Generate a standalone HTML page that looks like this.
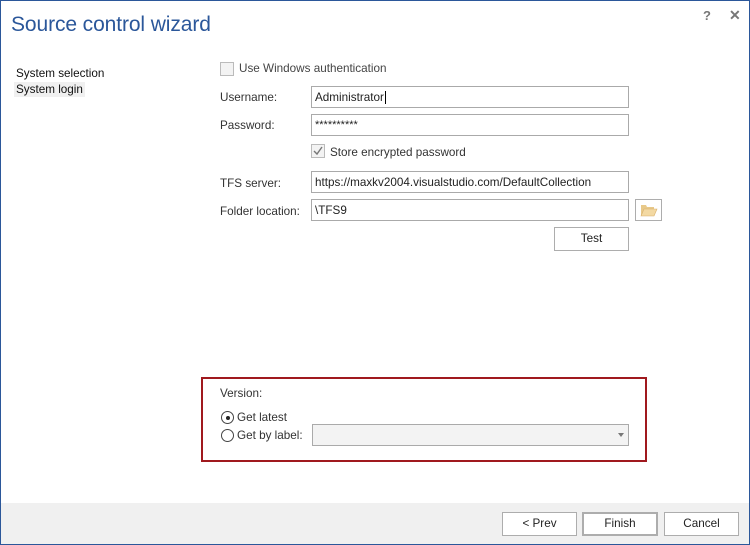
<!DOCTYPE html>
<html><head><style>
*{margin:0;padding:0;box-sizing:border-box}
body{width:750px;height:545px;background:#fff;font-family:"Liberation Sans",sans-serif;font-size:11.7px;color:#333;position:relative;overflow:hidden}
.win{position:absolute;left:0;top:0;width:750px;height:545px;border:1px solid #2b579a}
.a{position:absolute;white-space:nowrap}
.inp{position:absolute;border:1px solid #aaa;background:#fff;height:22px;padding:4px 0 0 3px;color:#222}
.btn{position:absolute;border:1px solid #adadad;background:#fff;height:24px;text-align:center;line-height:22px;color:#222}
.cb{position:absolute;width:14px;height:14px;border:1px solid #bbb;background:#f3f3f3}
.rad{position:absolute;width:13px;height:13px;border:1px solid #444;border-radius:50%;background:#fff}
</style></head><body>
<div class="win"></div>
<div class="a" style="left:11px;top:13px;font-size:21px;color:#2b579a;letter-spacing:-0.1px">Source control wizard</div>
<div class="a" style="left:703px;top:8px;font-weight:bold;color:#777;font-size:13px">?</div>
<div class="a" style="left:729px;top:7px;color:#777;font-size:14px;font-weight:bold">✕</div>
<div class="a" style="left:16px;top:67px;color:#111">System selection</div>
<div class="a" style="left:14px;top:82px;background:#f0f0f0;padding:1px 2px;color:#111">System login</div>

<div class="cb" style="left:220px;top:62px"></div>
<div class="a" style="left:239px;top:62px;color:#444">Use Windows authentication</div>
<div class="a" style="left:220px;top:91px">Username:</div>
<div class="inp" style="left:311px;top:86px;width:318px">Administrator<span style="border-left:1px solid #000;margin-left:1px"></span></div>
<div class="a" style="left:220px;top:119px">Password:</div>
<div class="inp" style="left:311px;top:114px;width:318px;font-size:11px">**********</div>
<div class="cb" style="left:311px;top:144px"><svg width="12" height="12" viewBox="0 0 12 12" style="position:absolute;left:0;top:0"><path d="M2 6l3 3 5-7" fill="none" stroke="#777" stroke-width="1.4"/></svg></div>
<div class="a" style="left:330px;top:146px">Store encrypted password</div>
<div class="a" style="left:220px;top:177px">TFS server:</div>
<div class="inp" style="left:311px;top:171px;width:318px">https://maxkv2004.visualstudio.com/DefaultCollection</div>
<div class="a" style="left:220px;top:205px">Folder location:</div>
<div class="inp" style="left:311px;top:199px;width:318px">\TFS9</div>
<div class="btn" style="left:635px;top:199px;width:27px;height:22px">
<svg width="18" height="14" viewBox="0 0 18 14" style="margin-top:3px"><path d="M1 2h5l1 2h7v2H4L1 13z" fill="#e8c98a"/><path d="M4 6h13l-3 7H1z" fill="#f3d9a3" stroke="#d9b06a" stroke-width=".6"/></svg></div>
<div class="btn" style="left:554px;top:227px;width:75px">Test</div>

<div class="a" style="left:201px;top:377px;width:446px;height:85px;border:2px solid #a0191e"></div>
<div class="a" style="left:220px;top:387px">Version:</div>
<div class="rad" style="left:221px;top:411px"><div style="position:absolute;left:3.5px;top:3.5px;width:4px;height:4px;border-radius:50%;background:#222"></div></div>
<div class="a" style="left:237px;top:411px">Get latest</div>
<div class="rad" style="left:221px;top:429px"></div>
<div class="a" style="left:237px;top:429px">Get by label:</div>
<div class="a" style="left:312px;top:424px;width:317px;height:22px;border:1px solid #aaa;background:#f3f3f3"><div style="position:absolute;right:4px;top:8px;border:3px solid transparent;border-top:4px solid #777"></div></div>

<div class="a" style="left:1px;top:503px;width:748px;height:41px;background:#f0f0f0"></div>
<div class="btn" style="left:502px;top:512px;width:75px">&lt; Prev</div>
<div class="btn" style="left:582px;top:512px;width:76px;border:2px solid #adadad;line-height:20px">Finish</div>
<div class="btn" style="left:664px;top:512px;width:75px">Cancel</div>
</body></html>
